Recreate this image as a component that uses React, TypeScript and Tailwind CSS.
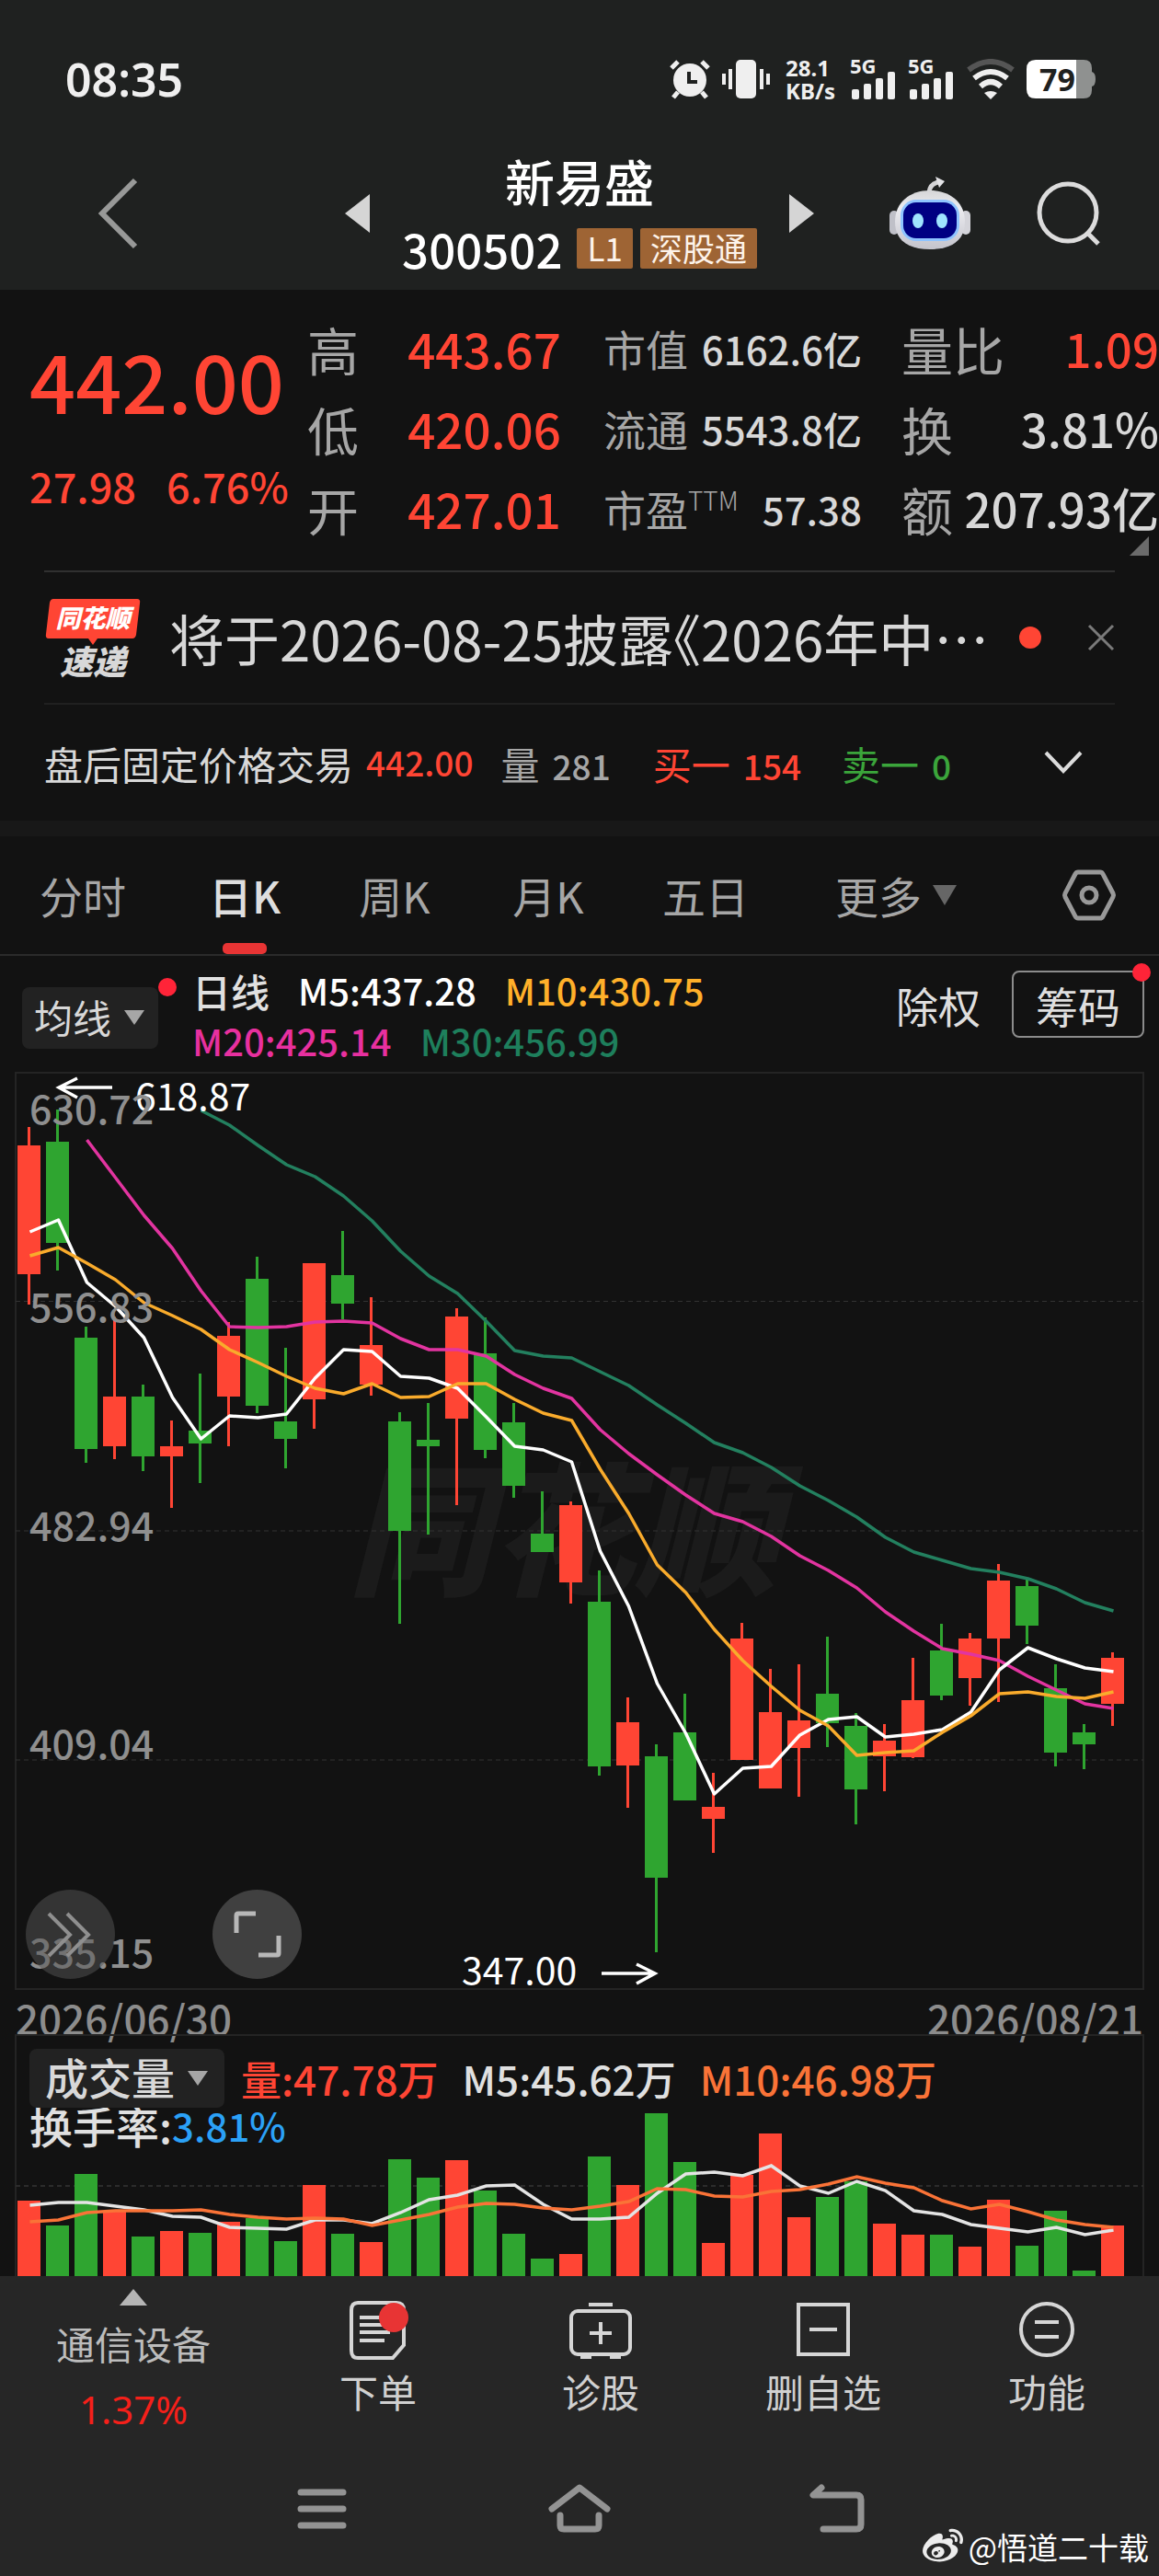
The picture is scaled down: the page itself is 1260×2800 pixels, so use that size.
import { useState } from "react";
import { FaWeibo } from "react-icons/fa";

const RED = "#ff4534";
const GREEN = "#2fa530";

// [isUp, high, bodyTop, bodyBottom, low] in chart units
const candles: [number, number, number, number, number][] = [
  [1, 1225, 1245, 1385, 1418],
  [0, 1206, 1241, 1351, 1381],
  [0, 1442, 1454, 1575, 1590],
  [1, 1431, 1518, 1572, 1586],
  [0, 1505, 1518, 1583, 1599],
  [1, 1544, 1572, 1583, 1639],
  [0, 1493, 1555, 1569, 1612],
  [1, 1437, 1452, 1518, 1572],
  [0, 1366, 1390, 1528, 1536],
  [0, 1465, 1545, 1564, 1596],
  [1, 1373, 1373, 1521, 1553],
  [0, 1338, 1386, 1417, 1434],
  [1, 1410, 1462, 1505, 1517],
  [0, 1535, 1545, 1664, 1765],
  [0, 1525, 1565, 1572, 1668],
  [1, 1422, 1431, 1542, 1636],
  [0, 1432, 1471, 1576, 1585],
  [0, 1525, 1546, 1615, 1628],
  [0, 1621, 1667, 1687, 1687],
  [1, 1632, 1636, 1720, 1743],
  [0, 1707, 1741, 1920, 1930],
  [1, 1845, 1872, 1919, 1965],
  [0, 1896, 1909, 2041, 2122],
  [0, 1841, 1883, 1957, 1957],
  [1, 1927, 1964, 1977, 2014],
  [1, 1764, 1781, 1913, 1913],
  [1, 1814, 1861, 1944, 1944],
  [1, 1809, 1870, 1900, 1953],
  [0, 1779, 1841, 1873, 1899],
  [0, 1862, 1876, 1945, 1983],
  [1, 1874, 1892, 1909, 1947],
  [1, 1802, 1848, 1910, 1911],
  [0, 1765, 1794, 1843, 1848],
  [1, 1775, 1781, 1824, 1854],
  [1, 1700, 1718, 1781, 1850],
  [0, 1716, 1724, 1767, 1787],
  [0, 1809, 1835, 1905, 1920],
  [0, 1874, 1883, 1896, 1923],
  [1, 1796, 1802, 1852, 1876],
];

const ma5 = [
  1339, 1326, 1394, 1420, 1454, 1519, 1564, 1539, 1541, 1537, 1498, 1467, 1469, 1496, 1498, 1509, 1540, 1572, 1576,
  1589, 1686, 1746, 1830, 1884, 1950, 1922, 1920, 1886, 1869, 1866, 1888, 1885, 1880, 1861, 1815, 1791, 1803, 1813,
  1817,
];
const ma10 = [
  1365, 1356, 1373, 1391, 1416, 1430, 1445, 1467, 1481, 1496, 1509, 1515, 1504, 1519, 1518, 1504, 1504, 1521, 1536,
  1544, 1597, 1645, 1701, 1731, 1771, 1805, 1833, 1859, 1876, 1908, 1905, 1903, 1883, 1865, 1841, 1839, 1844, 1846,
  1839,
];
const ma20 = [
  1239, 1280, 1321, 1357, 1403, 1442, 1443, 1442, 1437, 1436, 1438, 1455, 1467, 1467, 1474, 1494, 1509, 1520, 1554,
  1580, 1603, 1625, 1645, 1654, 1670, 1691, 1707, 1726, 1752, 1773, 1792, 1798, 1805, 1822, 1837, 1852, 1857,
];
const ma30 = [
  1207, 1223, 1245, 1266, 1279, 1300, 1327, 1360, 1387, 1406, 1436, 1468, 1474, 1476, 1491, 1506, 1527, 1547, 1568,
  1579, 1595, 1615, 1631, 1649, 1671, 1687, 1696, 1705, 1709, 1716, 1727, 1742, 1751,
];

const volumes = [
  2392, 2419, 2363, 2404, 2431, 2425, 2427, 2415, 2411, 2436, 2375, 2428, 2437, 2347, 2367, 2348, 2381, 2428, 2455,
  2450, 2344, 2375, 2297, 2350, 2438, 2364, 2319, 2410, 2388, 2371, 2417, 2429, 2429, 2442, 2391, 2441, 2403, 2468,
  2419,
];
const vol5 = [
  2397, 2394, 2394, 2398, 2402, 2409, 2410, 2421, 2422, 2423, 2413, 2413, 2417, 2405, 2391, 2386, 2376, 2375, 2396,
  2412, 2412, 2410, 2384, 2363, 2361, 2365, 2354, 2376, 2384, 2371, 2381, 2403, 2407, 2418, 2422, 2426, 2421, 2429,
  2424,
];
const vol10 = [
  2415, 2413, 2405, 2403, 2403, 2403, 2402, 2407, 2410, 2412, 2411, 2412, 2419, 2413, 2407, 2399, 2395, 2396, 2400,
  2402, 2398, 2393, 2379, 2380, 2387, 2388, 2382, 2380, 2374, 2366, 2373, 2378, 2392, 2401, 2396, 2404, 2413, 2418,
  2421,
];

const cx = (i: number) => 31.5 + i * 31;
const line = (ys: number[], start = 0) => ys.map((y, i) => `${cx(i + start) + 1},${y}`).join(" ");

const StatusBar = () => (
  <div className="flex h-[166px] items-center justify-between pt-[5px] pr-[70px] pl-[71px] font-['Noto_Sans',sans-serif] text-[#efefef]">
    <span className="text-[50px] leading-none font-semibold">08:35</span>
    <div className="flex items-center gap-[12px]">
      <svg width="44" height="44" viewBox="0 0 44 44" fill="none">
        <circle cx="22" cy="23" r="18" fill="#efefef" />
        <path d="M2 10L9 3M42 10L35 3" stroke="#efefef" strokeWidth="5" />
        <path d="M9 36L4 42M35 36L40 42" stroke="#efefef" strokeWidth="5" />
        <path d="M21 14V25H30" stroke="#1f2120" strokeWidth="4" />
      </svg>
      <svg width="54" height="44" viewBox="0 0 54 44" fill="#efefef">
        <rect x="16" y="1" width="22" height="42" rx="5" />
        <path d="M8 11h4v22H8zM1 16h4v12H1zM42 11h4v22h-4zM49 16h4v12h-4z" />
      </svg>
      <div className="mx-1 text-[24px] leading-[25px] font-bold">
        <div>28.1</div>
        <div>KB/s</div>
      </div>
      {[0, 1].map((n) => (
        <div key={n} className="flex w-[51px] flex-col">
          <span className="text-[22px] leading-[14px] font-bold">5G</span>
          <svg width="51" height="30" viewBox="0 0 51 30" fill="#efefef">
            <rect x="2" y="19" width="8" height="11" rx="2" />
            <rect x="15" y="13" width="8" height="17" rx="2" />
            <rect x="28" y="7" width="8" height="23" rx="2" />
            <rect x="41" y="0" width="8" height="30" rx="2" />
          </svg>
        </div>
      ))}
      <svg width="54" height="44" viewBox="0 0 54 44" fill="none" strokeWidth="6">
        <path d="M3 12Q27 -6 51 12" stroke="#555" />
        <path d="M9 21Q27 7 45 21" stroke="#efefef" />
        <path d="M16 30Q27 20 38 30" stroke="#efefef" />
        <path d="M20 37Q27 33 34 37L27 44Z" fill="#efefef" />
      </svg>
      <div className="relative flex h-[42px] w-[74px] items-center">
        <svg className="absolute inset-0" width="76" height="42" viewBox="0 0 76 42">
          <path d="M54 0h8q9 0 9 9v4q4 1 4 8t-4 8v4q0 9-9 9h-8z" fill="#8f9190" />
          <path d="M10 0H54V42H10Q0 42 0 32V10Q0 0 10 0Z" fill="#fff" />
        </svg>
        <span className="relative pl-[14px] text-[34px] leading-none font-bold text-[#1f2120]">79</span>
      </div>
    </div>
  </div>
);

const Robot = () => (
  <svg width="88" height="80" viewBox="0 0 88 80">
    <defs>
      <linearGradient id="head" x1="0" y1="0" x2="0" y2="1">
        <stop offset="0" stopColor="#d6d6d8" />
        <stop offset="0.3" stopColor="#ececf0" />
        <stop offset="1" stopColor="#c4c4cc" />
      </linearGradient>
    </defs>
    <path d="M43 17Q44 8 53 6" fill="none" stroke="#d4d4d6" strokeWidth="5" />
    <path d="M50 0L60 5L54 12Z" fill="#e3e3e6" />
    <rect x="0" y="37" width="10" height="26" rx="5" fill="#bfc0c8" />
    <rect x="78" y="37" width="10" height="26" rx="5" fill="#d4d4da" />
    <path d="M44 15C66 15 82 28 82 49C82 69 68 79 44 79S6 69 6 49C6 28 22 15 44 15Z" fill="url(#head)" />
    <rect x="12" y="25" width="64" height="45" rx="17" fill="#8fc4ff" />
    <rect x="15" y="28" width="58" height="39" rx="14" fill="#000082" />
    <ellipse cx="31" cy="48" rx="6" ry="8" fill="#a0e4ff" />
    <ellipse cx="57" cy="48" rx="6" ry="8" fill="#a0e4ff" />
  </svg>
);

const NavBar = () => (
  <div className="grid grid-cols-[1fr_510px_1fr] items-center pb-[17px]">
    <div className="pl-[104px]">
      <button aria-label="返回" className="block">
        <svg width="48" height="80" viewBox="0 0 48 80" fill="none" stroke="#989998" strokeWidth="6">
          <path d="M43 4L7 40L43 76" />
        </svg>
      </button>
    </div>
    <div className="flex items-center justify-between">
      <button aria-label="上一只">
        <svg width="27" height="42" viewBox="0 0 27 42" fill="#d5d5d5"><path d="M27 0V42L0 21Z" /></svg>
      </button>
      <div className="flex flex-col items-center gap-[14px]">
        <h1 className="text-[54px] leading-[62px] font-medium text-white">新易盛</h1>
        <div className="flex items-center gap-[8px] leading-[56px]">
          <span className="mr-2 text-[51px] font-medium text-white">300502</span>
          <span className="h-[44px] rounded-[2px] bg-[#9e6434] px-[11px] text-[35px] leading-[42px] text-[#fdf3ea]">L1</span>
          <span className="h-[44px] rounded-[2px] bg-[#9e6434] px-[11px] text-[35px] leading-[42px] text-[#fdf3ea]">深股通</span>
        </div>
      </div>
      <button aria-label="下一只">
        <svg width="27" height="42" viewBox="0 0 27 42" fill="#d5d5d5"><path d="M0 0V42L27 21Z" /></svg>
      </button>
    </div>
    <div className="flex items-center justify-end gap-[70px] pr-[61px]">
      <button aria-label="智能助手"><Robot /></button>
      <button aria-label="搜索">
        <svg width="74" height="74" viewBox="0 0 74 74" fill="none" stroke="#dcdcdc" strokeWidth="5">
          <circle cx="36" cy="36" r="31" />
          <path d="M57 58L69 70" />
        </svg>
      </button>
    </div>
  </div>
);

const Quote = () => (
  <section className="relative grid grid-cols-[334fr_276fr_327fr_323fr] pt-[20px] pb-[24px]">
    <div className="pl-[32px] font-medium text-[#ff4534]">
      <div className="text-[88px] leading-[154px]">442.00</div>
      <div className="flex gap-[33px] text-[45px] leading-[78px]">
        <span>27.98</span>
        <span>6.76%</span>
      </div>
    </div>
    <div className="leading-[87px]">
      {[["高", "443.67"], ["低", "420.06"], ["开", "427.01"]].map(([k, v]) => (
        <div key={k} className="flex items-center justify-between">
          <span className="text-[56px] text-[#a6a6a6]">{k}</span>
          <span className="text-[53px] font-medium text-[#ff4534]">{v}</span>
        </div>
      ))}
    </div>
    <div className="pl-[46px] leading-[87px]">
      {[["市值", "", "6162.6亿"], ["流通", "", "5543.8亿"], ["市盈", "TTM", "57.38"]].map(([k, sup, v]) => (
        <div key={k} className="flex items-center justify-between whitespace-nowrap">
          <span className="flex text-[46px] text-[#a6a6a6]">
            {k}
            {sup && <span className="text-[28px] leading-[68px] font-light">{sup}</span>}
          </span>
          <span className="text-[42px] font-medium text-[#d8d8d8]">{v}</span>
        </div>
      ))}
    </div>
    <div className="pl-[43px] leading-[87px]">
      {[["量比", "1.09"], ["换", "3.81%"], ["额", "207.93亿"]].map(([k, v], i) => (
        <div key={k} className="flex items-center justify-between whitespace-nowrap">
          <span className="text-[56px] text-[#a6a6a6]">{k}</span>
          <span className={`text-[51px] font-medium ${i === 0 ? "text-[#ff4534]" : "text-[#d8d8d8]"}`}>{v}</span>
        </div>
      ))}
    </div>
    <svg className="absolute right-[11px] bottom-[16px]" width="21" height="21" viewBox="0 0 21 21" fill="#6b6b6b">
      <path d="M21 0V21H0Z" />
    </svg>
  </section>
);

const News = () => (
  <div className="mx-[48px] flex h-[146px] items-center border-t-2 border-b-2 border-t-[#303030] border-b-[#202020]">
    <div className="relative mr-[30px] flex h-[88px] w-[106px] shrink-0 flex-col items-center font-black italic">
      <svg className="absolute inset-0" width="106" height="88" viewBox="0 0 106 88" fill="#ff4534">
        <path d="M10 2H101Q105 2 104 7L100 41Q99 45 96 45H58L53 52L48 45H5Q1 45 2 40L6 6Q7 2 10 2Z" />
      </svg>
      <span className="relative text-[27px] leading-[44px] text-white">同花顺</span>
      <span className="relative text-[36px] leading-[48px] text-[#d8d8d8]">速递</span>
    </div>
    <a href="#news" className="whitespace-nowrap text-[60px] leading-[80px] text-[#d8d8d8]">
      将于2026-08-25披露<span className="[font-feature-settings:'halt']">《</span>2026年中…
    </a>
    <span className="ml-auto size-[24px] shrink-0 rounded-full bg-[#ff4534]" />
    <button aria-label="关闭" className="ml-[50px] shrink-0">
      <svg width="30" height="30" viewBox="0 0 30 30" stroke="#7a7a7a" strokeWidth="3"><path d="M2 2L28 28M28 2L2 28" /></svg>
    </button>
  </div>
);

const AfterHours = () => (
  <div className="flex h-[126px] items-center pr-[83px] pl-[48px] text-[37px] font-medium whitespace-nowrap">
    <span className="text-[42px] font-normal text-[#d8d8d8]">盘后固定价格交易</span>
    <span className="ml-[14px] text-[#ff4534]">442.00</span>
    <span className="ml-[30px] text-[#a6a6a6]"><span className="mr-[14px] text-[42px] font-normal">量</span>281</span>
    <span className="ml-[46px] text-[#ff4534]"><span className="mr-[14px] text-[42px] font-normal">买一</span>154</span>
    <span className="ml-[44px] text-[#3ba53b]"><span className="mr-[14px] text-[42px] font-normal">卖一</span>0</span>
    <button aria-label="展开" className="ml-auto">
      <svg width="42" height="26" viewBox="0 0 42 26" fill="none" stroke="#dcdcdc" strokeWidth="4"><path d="M2 2L21 22L40 2" /></svg>
    </button>
  </div>
);

const tabs = ["分时", "日K", "周K", "月K", "五日"];

const PeriodTabs = () => {
  const [active, setActive] = useState("日K");

  return (
    <nav className="grid h-[130px] grid-cols-[180fr_172fr_154fr_180fr_162fr_252fr_160fr] border-b-2 border-[#2b2b2b] text-[47px] whitespace-nowrap text-[#a6a6a6]">
      {tabs.map((tab) => (
        <button
          key={tab}
          onClick={() => setActive(tab)}
          className={`relative ${active === tab ? "font-medium text-[#dedede]" : ""}`}
        >
          {tab}
          {active === tab && (
            <span className="absolute bottom-0 left-1/2 h-[12px] w-[48px] -translate-x-1/2 rounded-[5px] bg-[#e83434]" />
          )}
        </button>
      ))}
      <button className="flex items-center justify-center gap-[12px]">
        更多
        <svg width="26" height="22" viewBox="0 0 26 22" fill="#666"><path d="M0 0H26L13 22Z" /></svg>
      </button>
      <button aria-label="设置" className="flex items-center justify-center pl-[8px]">
        <svg width="60" height="60" viewBox="0 0 60 60" fill="none" stroke="#999" strokeWidth="5">
          <path d="M18 5H42Q44 5 45 7L56 28Q57 30 56 32L45 53Q44 55 42 55H18Q16 55 15 53L4 32Q3 30 4 28L15 7Q16 5 18 5Z" />
          <circle cx="30" cy="30" r="8" />
        </svg>
      </button>
    </nav>
  );
};

const IndicatorBar = () => (
  <div className="flex h-[126px] pr-[16px] pl-[24px] whitespace-nowrap">
    <div className="relative mt-[34px] h-[67px] w-[148px] rounded-[8px] bg-[#222]">
      <select aria-label="主图指标" className="h-full w-full appearance-none pb-1 pl-[13px] text-[42px] text-[#d8d8d8]">
        <option>均线</option>
        <option>BOLL</option>
      </select>
      <svg className="pointer-events-none absolute top-[25px] right-[15px]" width="22" height="16" viewBox="0 0 22 16" fill="#a6a6a6">
        <path d="M0 0H22L11 16Z" />
      </svg>
      <span className="absolute -top-[10px] -right-[20px] size-[20px] rounded-full bg-[#ff2438]" />
    </div>
    <div className="mt-[10px] ml-[37px] text-[40px] leading-[55px] font-medium">
      <div className="flex gap-[31px]">
        <span className="text-[42px] text-[#e0e0e0]">日线</span>
        <span className="text-white">M5:437.28</span>
        <span className="text-[#ffb02a]">M10:430.75</span>
      </div>
      <div className="flex gap-[31px]">
        <span className="text-[#e8309f]">M20:425.14</span>
        <span className="text-[#1e7f5c]">M30:456.99</span>
      </div>
    </div>
    <button className="mt-[16px] mr-[34px] ml-auto h-[73px] text-[46px] leading-[68px] text-[#dedede]">除权</button>
    <button className="relative mt-[16px] h-[73px] w-[144px] rounded-[8px] border-2 border-[#8c8c8c] text-[46px] leading-[64px] text-[#dedede]">
      筹码
      <span className="absolute -top-[10px] -right-[9px] size-[20px] rounded-full bg-[#ff2438]" />
    </button>
  </div>
);

const axis: [string, number][] = [
  ["630.72", 1222],
  ["556.83", 1437],
  ["482.94", 1675],
  ["409.04", 1912],
  ["335.15", 2139],
];

const KLine = () => (
  <div className="relative">
    <svg className="block w-full" viewBox="0 1165 1260 998" fill="none">
      <text x="612" y="1722" textAnchor="middle" fontSize="156" fontStyle="italic" fontWeight="900" fill="#1b1b1b">同花顺</text>
      <rect x="17" y="1166" width="1226" height="996" stroke="#242424" strokeWidth="2" />
      {[1414.5, 1664, 1913].map((y) => (
        <path key={y} d={`M17 ${y}H1243`} stroke="#323232" strokeWidth="1" strokeDasharray="5 4" />
      ))}
      {candles.map(([up, high, top, bottom, low], i) => (
        <g key={i} fill={up ? RED : GREEN}>
          <rect x={cx(i) - 1.5} y={high} width="3" height={low - high} />
          <rect x={cx(i) - 12.5} y={top} width="25" height={bottom - top} />
        </g>
      ))}
      <g strokeWidth="3.5" strokeLinejoin="round">
        <polyline points={line(ma30, 6)} stroke="#23805f" />
        <polyline points={line(ma20, 2)} stroke="#e234a0" />
        <polyline points={line(ma5)} stroke="#fff" />
        <polyline points={line(ma10)} stroke="#f9ab2c" />
      </g>
      <g stroke="#fff" strokeWidth="3.5">
        <path d="M122 1182H64M84 1172L64 1182L84 1193" />
        <path d="M654 2145H712M692 2135L712 2145L692 2156" />
      </g>
      <g fill="#fff" fontSize="41">
        <text x="147" y="1207">618.87</text>
        <text x="502" y="2157">347.00</text>
      </g>
      <g fill="#8f8f8f" fontSize="43" fontWeight="500">
        {axis.map(([label, y]) => (
          <text key={label} x="32" y={y}>{label}</text>
        ))}
      </g>
    </svg>
    <button aria-label="展开工具" className="absolute bottom-[12px] left-[28px] size-[97px] rounded-full bg-[#555]/50">
      <svg viewBox="0 0 97 97" fill="none" stroke="#8f8f8f" strokeWidth="4"><path d="M25 26L48 49L25 72M45 26L68 49L45 72" /></svg>
    </button>
    <button aria-label="全屏" className="absolute bottom-[12px] left-[231px] size-[97px] rounded-full bg-[#404040]">
      <svg viewBox="0 0 97 97" fill="none" stroke="#b8b8b8" strokeWidth="5"><path d="M26 47V28Q26 26 28 26H47M50 71H70Q72 71 72 69V50" /></svg>
    </button>
  </div>
);

const Volume = () => (
  <div className="relative">
    <svg className="block w-full" viewBox="0 2211 1260 263" fill="none">
      <path d="M17 2474V2212H1243V2474" stroke="#242424" strokeWidth="2" />
      <path d="M17 2376H1243" stroke="#2c2c2c" strokeWidth="2" strokeDasharray="5 4" />
      {volumes.map((y, i) => (
        <rect key={i} x={cx(i) - 12.5} y={y} width="25" height={2474 - y} fill={candles[i][0] ? RED : GREEN} />
      ))}
      <polyline points={line(vol5)} stroke="#e4e4e4" strokeWidth="3.5" />
      <polyline points={line(vol10)} stroke="#fa7337" strokeWidth="3.5" />
    </svg>
    <div className="absolute inset-x-0 top-[16px] pl-[32px] font-medium whitespace-nowrap">
      <div className="flex items-center text-[44px] leading-[60px]">
        <div className="relative h-[64px] w-[212px] rounded-[8px] bg-[#222]">
          <select aria-label="副图指标" className="h-full w-full appearance-none pb-1 pl-[17px] text-[47px] text-[#d8d8d8]">
            <option>成交量</option>
            <option>MACD</option>
          </select>
          <svg className="pointer-events-none absolute top-[24px] right-[18px]" width="22" height="16" viewBox="0 0 22 16" fill="#a6a6a6">
            <path d="M0 0H22L11 16Z" />
          </svg>
        </div>
        <span className="ml-[18px] text-[#ff4534]">量:47.78万</span>
        <span className="ml-[26px] text-[#e0e0e0]">M5:45.62万</span>
        <span className="ml-[26px] text-[#fa7337]">M10:46.98万</span>
      </div>
      <div className="flex text-[47px] leading-[38px] text-[#e0e0e0]">
        换手率:<span className="text-[42px] text-[#2ba1f7]">3.81%</span>
      </div>
    </div>
  </div>
);

const TabBar = () => (
  <nav className="grid grid-cols-[290fr_242fr_242fr_242fr_244fr] text-[42px] text-[#d0d0d0]">
    <button className="flex flex-col items-center pt-[14px]">
      <svg width="30" height="18" viewBox="0 0 30 18" fill="#b5b5b5"><path d="M15 0L30 18H0Z" /></svg>
      <span className="mt-[11px] leading-[60px] text-[#bcbcbc]">通信设备</span>
      <span className="mt-[12px] font-['Noto_Sans',sans-serif] leading-[60px] text-[#f5201a]">1.37%</span>
    </button>
    <button className="flex flex-col items-center pt-[25px]">
      <svg width="66" height="66" viewBox="0 0 66 66" fill="none" stroke="#d6d6d6" strokeWidth="4">
        <path d="M11 4H53Q61 4 61 12V50L49 64H11Q4 64 4 56V12Q4 4 11 4Z" />
        <path d="M13 20H46M13 28H46M13 36H46M13 45H40" />
        <circle cx="50" cy="20" r="16" fill="#e83434" stroke="none" />
      </svg>
      <span className="mt-[4px] leading-[60px]">下单</span>
    </button>
    <button className="flex flex-col items-center pt-[25px]">
      <svg width="70" height="66" viewBox="0 0 70 66" fill="none" stroke="#d6d6d6" strokeWidth="4">
        <rect x="3" y="13" width="64" height="47" rx="7" />
        <path d="M22 6H48M35 25V49M23 37H47M13 63H25M45 63H57" />
      </svg>
      <span className="mt-[4px] leading-[60px]">诊股</span>
    </button>
    <button className="flex flex-col items-center pt-[25px]">
      <svg width="66" height="66" viewBox="0 0 66 66" fill="none" stroke="#d6d6d6" strokeWidth="4">
        <path d="M6 6H60V60H6ZM18 33H48" />
      </svg>
      <span className="mt-[4px] leading-[60px]">删自选</span>
    </button>
    <button className="flex flex-col items-center pt-[25px]">
      <svg width="66" height="66" viewBox="0 0 66 66" fill="none" stroke="#d6d6d6" strokeWidth="4">
        <circle cx="33" cy="33" r="28" />
        <path d="M20 25H46M20 41H46" />
      </svg>
      <span className="mt-[4px] leading-[60px]">功能</span>
    </button>
  </nav>
);

const SystemNav = () => (
  <div className="relative mt-auto flex items-center justify-center gap-[212px] pb-[43px]">
    <button aria-label="最近任务">
      <svg width="68" height="60" viewBox="0 0 68 60" stroke="#939393" strokeWidth="7" strokeLinecap="round">
        <path d="M11 12H57M11 30H57M11 48H57" />
      </svg>
    </button>
    <button aria-label="主屏幕">
      <svg width="68" height="60" viewBox="0 0 68 60" fill="none" stroke="#939393" strokeWidth="7" strokeLinecap="round" strokeLinejoin="round">
        <path d="M4 30L34 7L64 30M13 37V48Q13 52 17 52H51Q55 52 55 48V37" />
      </svg>
    </button>
    <button aria-label="返回上级">
      <svg width="68" height="60" viewBox="0 0 68 60" fill="none" stroke="#939393" strokeWidth="7" strokeLinecap="round" strokeLinejoin="round">
        <path d="M17 7L8 15H55Q60 15 60 20V47Q60 52 55 52H19" />
      </svg>
    </button>
    <div className="absolute right-[11px] bottom-[9px] flex items-center gap-[6px] text-[33px] leading-[46px] text-white">
      <FaWeibo className="size-[44px] text-[#ececec]" />
      @悟道二十载
    </div>
  </div>
);

export default function App() {
  return (
    <div className="flex min-h-screen flex-col overflow-hidden bg-[#121212] font-['Noto_Sans_CJK_SC',sans-serif]">
      <header className="bg-[#1f2120]">
        <StatusBar />
        <NavBar />
      </header>
      <Quote />
      <News />
      <AfterHours />
      <div className="h-[17px] bg-[#181818]" />
      <PeriodTabs />
      <IndicatorBar />
      <KLine />
      <div className="flex h-[48px] justify-between px-[17px] text-[44px] leading-[60px] font-medium text-[#8c8c8c]">
        <span>2026/06/30</span>
        <span>2026/08/21</span>
      </div>
      <Volume />
      <footer className="flex flex-1 flex-col bg-[#262626]">
        <TabBar />
        <SystemNav />
      </footer>
    </div>
  );
}
